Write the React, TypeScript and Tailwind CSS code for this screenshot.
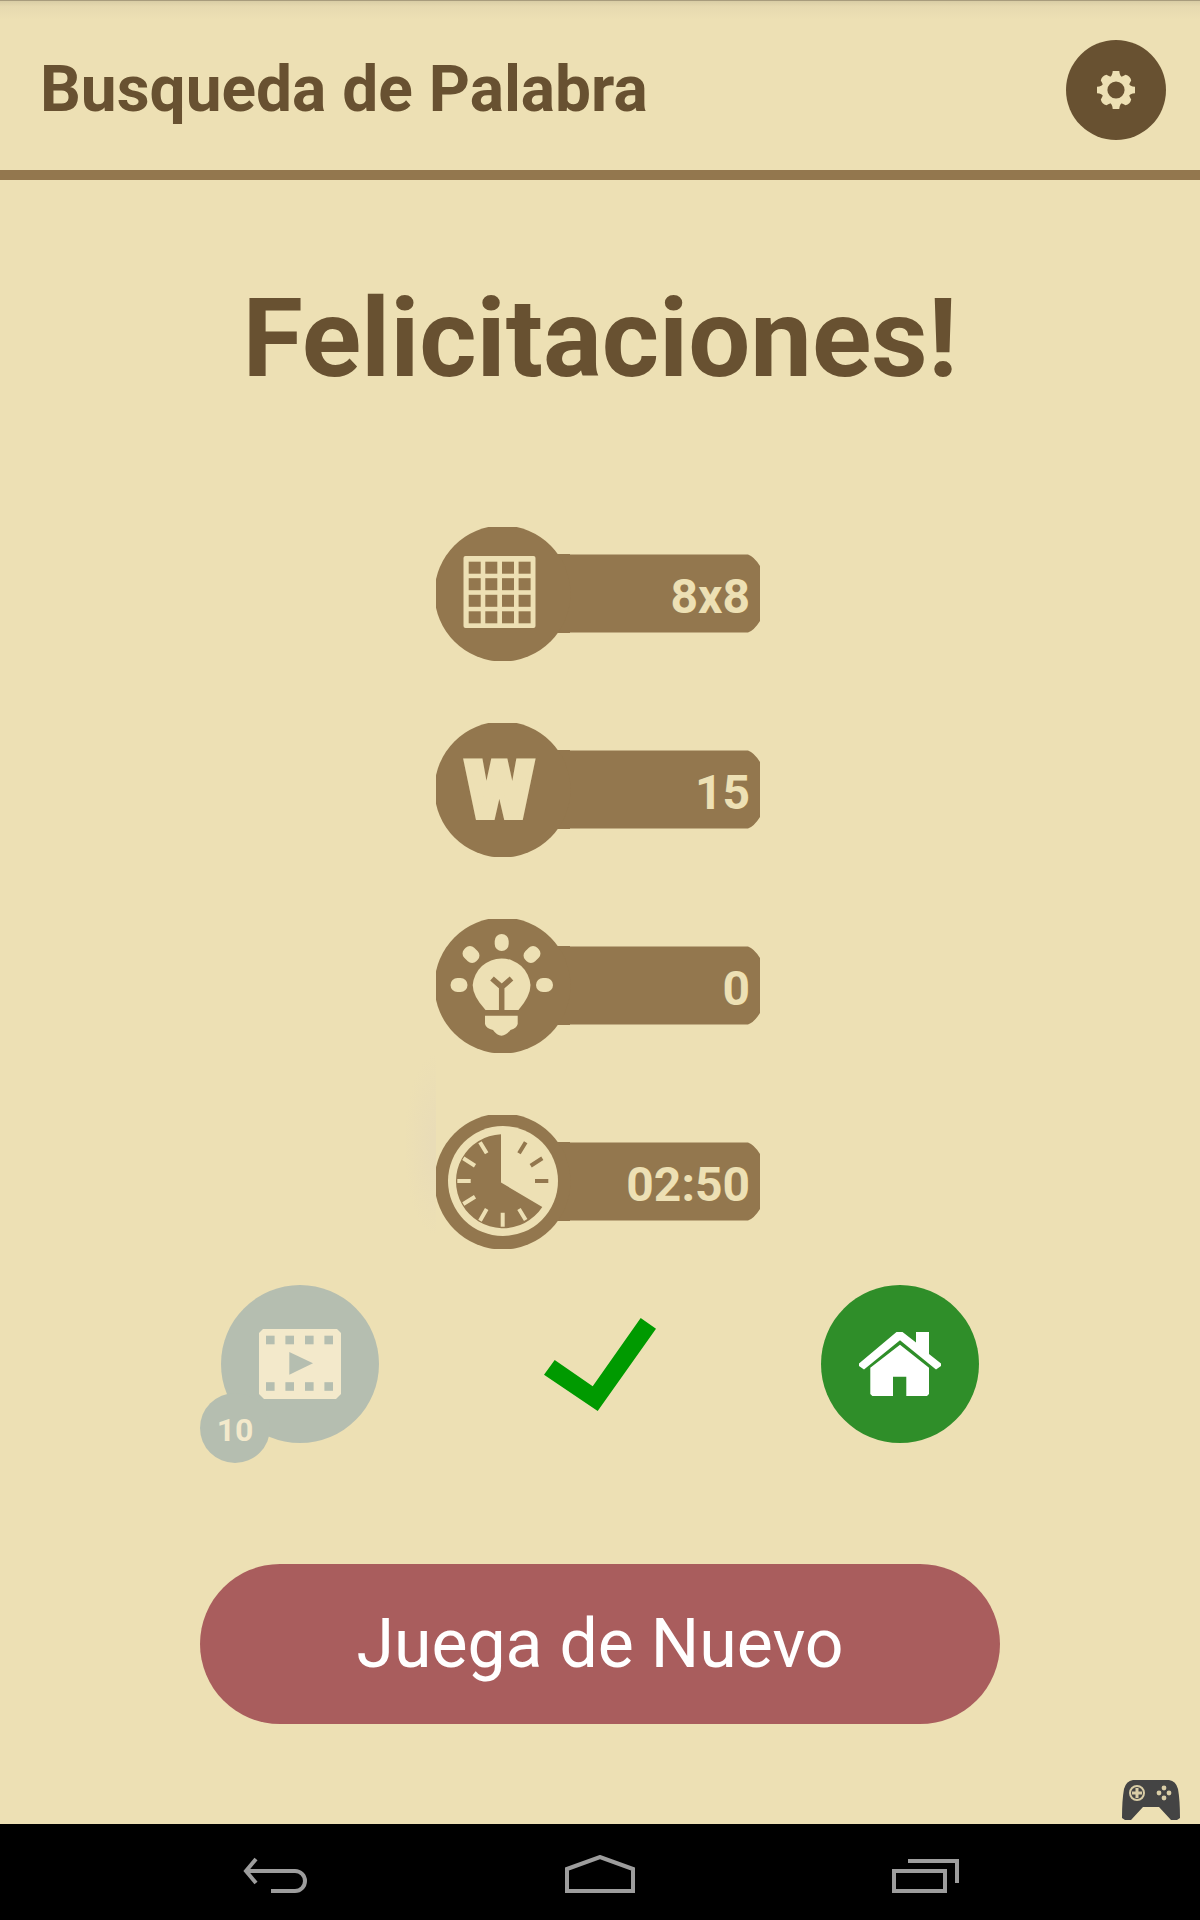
import React from 'react';

interface StatProps {
  label: string;
  value: string;
  glow?: boolean;
  children: React.ReactNode;
}

const Stat: React.FC<StatProps> = ({ label, value, glow, children }) => (
  <li className="relative grid w-[324px] items-center">
    {glow && (
      <span className="absolute right-full bottom-3 h-46 w-8 bg-[radial-gradient(ellipse_at_right,#e9dcb7_10%,#ede0b4_70%)]" />
    )}
    <svg viewBox="0 0 324 134" className="col-start-1 row-start-1 w-full" role="img" aria-label={label}>
      <path d="M100 27 H134 V27.5 H312 Q318 29.5 324 39 V94 Q318 103.5 312 105.5 H134 V106 H100 Z" fill="#93774e" />
      <circle cx="66.5" cy="66.5" r="68" fill="#93774e" />
      {children}
    </svg>
    <span className="col-start-1 row-start-1 pt-1.5 pr-2.5 text-right text-5xl font-bold text-[#ede0b4]">{value}</span>
  </li>
);

const GridIcon: React.FC = () => (
  <>
    <rect x="27.5" y="29" width="72" height="72" rx="2" fill="#ede0b4" />
    {[32.7, 49.3, 66, 82.6].map((x) =>
      [34.7, 51.2, 67.8, 84.3].map((y) => (
        <rect key={`${x}-${y}`} x={x} y={y} width="12" height="12" fill="#93774e" />
      ))
    )}
  </>
);

const BulbIcon: React.FC = () => (
  <g fill="#ede0b4">
    <rect x="58.7" y="15" width="14" height="17" rx="7" />
    <rect x="14.5" y="59" width="17" height="14" rx="7" />
    <rect x="100" y="59" width="17" height="14" rx="7" />
    <rect x="28" y="27" width="14" height="17" rx="6" transform="rotate(-45 35 35.5)" />
    <rect x="89" y="27" width="14" height="17" rx="6" transform="rotate(45 96 35.5)" />
    <path d="M49.5 91 Q36.7 77 36.7 66 A29 29 0 0 1 94.5 66 Q94.5 77 82.5 91 Z" />
    <path d="M56 59.5 L65.7 68 L75.5 59.5 M65.7 67 V91" fill="none" stroke="#93774e" strokeWidth="5.5" />
    <path d="M49 96.7 H81.7 V105 Q80.5 109.5 74.5 111 Q70 116.7 65.5 116.7 Q61 116.7 57 111 Q50 109.5 49 105 Z" />
  </g>
);

const ClockIcon: React.FC = () => (
  <>
    <circle cx="67" cy="66" r="55" fill="#ede0b4" />
    <path d="M65 19.3 V67.5 L106.3 92 A47 47 0 1 1 65 19.3 Z" fill="#93774e" />
    <g strokeWidth="4" fill="none">
      <path d="M89.7 27.3 L83 38.3 M106.3 43.3 L94.7 50.7 M112.3 66 H99" stroke="#93774e" />
      <path
        d="M83 94 L89.7 105 M66.7 97.7 V111.7 M50.7 94 L44 105.7 M39 81.7 L27.3 89 M21.3 66 H34.7 M39 50.7 L27.3 43.3 M50.7 38.3 L44 27.3"
        stroke="#ede0b4"
      />
    </g>
  </>
);

const GearIcon: React.FC = () => (
  <svg viewBox="-19 -19 38 38" className="size-[38px]" aria-hidden="true">
    <g fill="#ede0b4">
      <circle r="14" />
      {[0, 90, 180, 270].map((a) => (
        <path key={a} d="M-7 -12 Q-3.5 -14 -3.3 -19 H3.3 Q3.5 -14 7 -12 Z" transform={`rotate(${a})`} />
      ))}
      {[45, 135, 225, 315].map((a) => (
        <path key={a} d="M-6 -12 Q-4.5 -15 -4 -17.5 Q0 -20 4 -17.5 Q4.5 -15 6 -12 Z" transform={`rotate(${a})`} />
      ))}
    </g>
    <circle r="8.6" fill="#685131" />
  </svg>
);

const FilmIcon: React.FC = () => (
  <svg viewBox="0 0 82 70" className="w-[82px]" aria-hidden="true">
    <path d="M4 0 H78 L82 4 V65 L77 70 H5 L0 65 V4 Z" fill="#f3e9cb" />
    {[7, 26.4, 46, 65.4].map((x) => (
      <React.Fragment key={x}>
        <rect x={x} y="6.7" width="8.6" height="8.6" fill="#b5beb0" />
        <rect x={x} y="53.2" width="8.6" height="8.6" fill="#b5beb0" />
      </React.Fragment>
    ))}
    <path d="M30.3 23 L54 34.3 L30.3 45.7 Z" fill="#b5beb0" />
  </svg>
);

const HouseIcon: React.FC = () => (
  <svg viewBox="0 0 82 64" className="w-[82px]" fill="#fff" aria-hidden="true">
    <path d="M0 31.5 L37.5 0 H43.5 L57 10.5 V0 H70 V22 L82 31.5 V34 L77 37.5 L41 8.3 L5 37.5 L0 34 Z" />
    <path d="M11.3 35.7 L41 12.7 L70 35.7 V62 L68 64 H47.3 V44.7 H34 V64 H13.3 L11.3 62 Z" />
  </svg>
);

const GamepadIcon: React.FC = () => (
  <svg viewBox="0 0 58 40" className="w-[58px]" aria-hidden="true">
    <path
      d="M11 0 H47 Q54 1 56 9 Q58 20 58 38 L55 40 H49 L37 27 H21 L9 40 H3 L0 38 Q0 20 2 9 Q4 1 11 0 Z"
      fill="#444444"
    />
    <circle cx="15" cy="13" r="7" fill="none" stroke="#d9cda6" strokeWidth="2" />
    <path d="M15 8 V18 M10 13 H20" stroke="#d9cda6" strokeWidth="3" />
    <g fill="#d9cda6">
      <circle cx="42" cy="8" r="2.4" />
      <circle cx="42" cy="18" r="2.4" />
      <circle cx="37" cy="13" r="2.4" />
      <circle cx="47" cy="13" r="2.4" />
    </g>
  </svg>
);

export default function App() {
  return (
    <div className="flex min-h-screen flex-col bg-[#ede0b4] font-['Roboto',sans-serif]">
      {/* Header */}
      <header className="border-b-10 border-[#93774e]">
        <div className="h-5 border-t border-[#a89c7d] bg-linear-to-b from-[#d9cda5] via-[#e7dab0] via-30% to-[#ede0b4]" />
        <div className="flex items-center justify-between pt-5 pr-8.5 pb-7.5 pl-10">
          <h1 className="text-[64px] leading-none font-bold text-[#685131]">Busqueda de Palabra</h1>
          <button
            type="button"
            aria-label="Ajustes"
            className="flex size-25 items-center justify-center rounded-full bg-[#685131]"
          >
            <GearIcon />
          </button>
        </div>
      </header>

      {/* Results */}
      <main className="flex flex-1 flex-col items-center">
        <h2 className="pt-26 text-[110px] leading-none font-bold text-[#685131]">Felicitaciones!</h2>
        <ul className="mt-[133px] flex flex-col gap-[62px] pr-1">
          <Stat label="Tablero" value="8x8">
            <GridIcon />
          </Stat>
          <Stat label="Palabras" value="15">
            <text
              x="63.5"
              y="94"
              textAnchor="middle"
              className="fill-[#ede0b4] stroke-[#ede0b4] stroke-6 text-[77px] font-black"
            >
              W
            </text>
          </Stat>
          <Stat label="Pistas" value="0">
            <BulbIcon />
          </Stat>
          <Stat label="Tiempo" value="02:50" glow>
            <ClockIcon />
          </Stat>
        </ul>

        {/* Actions */}
        <div className="mt-9 grid w-3/4 grid-cols-3 items-center justify-items-center">
          <button
            type="button"
            disabled
            className="relative flex size-[158px] items-center justify-center rounded-full bg-[#b5beb0]"
          >
            <FilmIcon />
            <span className="absolute -bottom-5 -left-[21px] flex size-[70px] items-center justify-center rounded-full bg-[#b5beb0] pt-1 text-[32px] font-bold text-[#f3e9cb]">
              10
            </span>
          </button>
          <svg viewBox="0 0 112 93" className="w-28" role="img" aria-label="Completado">
            <path d="M0 56.7 L10.7 42 L48.7 68.3 L96.7 0 L112 10.7 L53.7 93 Z" fill="#009a00" />
          </svg>
          <a
            href="#inicio"
            aria-label="Inicio"
            className="flex size-[158px] items-center justify-center rounded-full bg-[#2f8e29]"
          >
            <HouseIcon />
          </a>
        </div>

        <button
          type="button"
          className="mt-[121px] h-40 w-2/3 rounded-full bg-[#a95d5d] text-[68px] leading-none text-white"
        >
          Juega de Nuevo
        </button>
        <div className="mt-auto mr-5 mb-1 self-end">
          <GamepadIcon />
        </div>
      </main>

      {/* System navigation */}
      <nav className="flex h-24 justify-center bg-black">
        <div className="grid w-13/16 grid-cols-3 items-center justify-items-center pt-1">
          <button type="button" aria-label="Atrás">
            <svg viewBox="0 0 64 38" className="w-16" fill="none" stroke="#9d9d9d" strokeWidth="4">
              <path d="M13 4 L3 16 L13 28" />
              <path d="M3 16 H52 A10 10 0 0 1 52 36 H28" />
            </svg>
          </button>
          <button type="button" aria-label="Pantalla de inicio">
            <svg viewBox="0 0 70 38" className="w-[70px]" fill="none" stroke="#9d9d9d" strokeWidth="4">
              <path d="M2 14 L35 2 L68 14 V36 H2 Z" />
            </svg>
          </button>
          <button type="button" aria-label="Recientes">
            <svg viewBox="0 0 68 38" className="w-17" fill="none" stroke="#9d9d9d" strokeWidth="4">
              <path d="M3 16 H54 V36 H3 Z M17 6 H66 V28" />
            </svg>
          </button>
        </div>
      </nav>
    </div>
  );
}
